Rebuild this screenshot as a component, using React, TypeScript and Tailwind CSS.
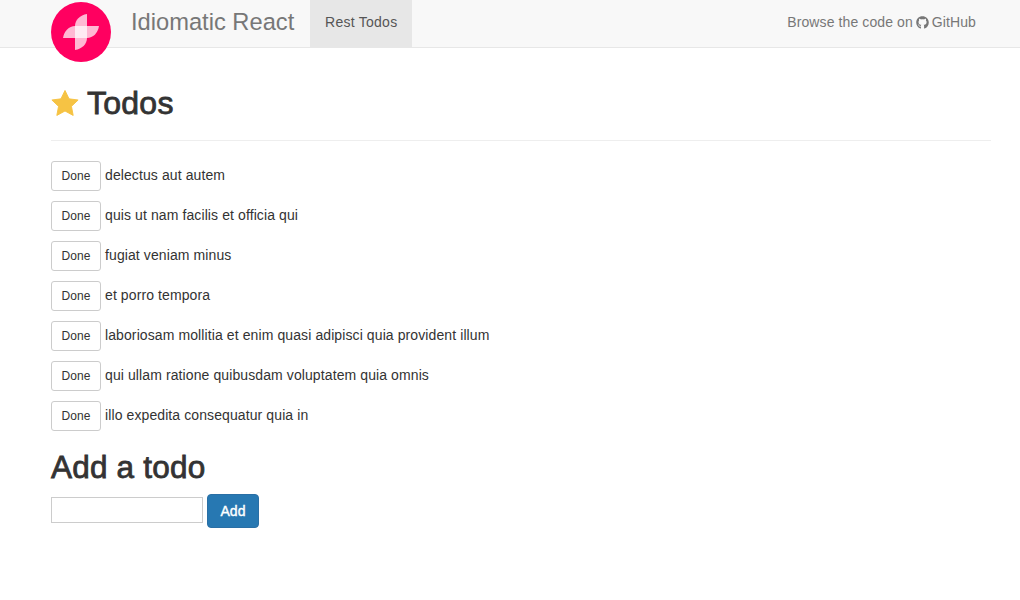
import { FaGithub } from "react-icons/fa";

const todos = [
  "delectus aut autem",
  "quis ut nam facilis et officia qui",
  "fugiat veniam minus",
  "et porro tempora",
  "laboriosam mollitia et enim quasi adipisci quia provident illum",
  "qui ullam ratione quibusdam voluptatem quia omnis",
  "illo expedita consequatur quia in",
];

const Logo = () => (
  <svg viewBox="0 0 60 60" className="absolute left-[51px] top-[2px] w-[60px] h-[60px]">
    <circle cx="30" cy="30" r="30" fill="#ff0060" />
    <path d="M36 12 C29 13 24 18 24 24 L24 48 C31 47 36 42 36 36 Z" fill="#fff" fillOpacity="0.72" />
    <path d="M12 36 C13 29 18 24 24 24 L48 24 C47 31 42 36 36 36 Z" fill="#fff" fillOpacity="0.72" />
  </svg>
);

const Star = () => (
  <svg viewBox="0 0 28 27" className="w-[28px] h-[26px] -mt-[2px]">
    <path
      d="M14 0.5 L18.2 9.2 L27.6 10.4 L20.7 17 L22.5 26.4 L14 21.8 L5.5 26.4 L7.3 17 L0.4 10.4 L9.8 9.2 Z"
      fill="#f6c344"
      stroke="#f6c344"
      strokeLinejoin="round"
    />
  </svg>
);

export default function App() {
  return (
    <div className="relative min-h-[600px] bg-white font-['Liberation_Sans',Arial,sans-serif] text-[14px] tracking-[0.1px] text-[#333]">
      <nav className="h-[48px] bg-[#f8f8f8] border-b border-[#e7e7e7] flex pl-[131px] pr-[44px]">
        <a className="text-[23.7px] tracking-normal leading-[44px] text-[#777] mr-[16px]">Idiomatic React</a>
        <a className="h-[47px] w-[102px] pb-[2px] bg-[#e7e7e7] text-[#555] tracking-[0.25px] flex items-center justify-center">
          Rest Todos
        </a>
        <a className="ml-auto pb-[2px] flex items-center gap-[3px] text-[#777]">
          Browse the code on <FaGithub className="w-[13px] h-[13px]" /> GitHub
        </a>
      </nav>
      <Logo />
      <main className="pl-[51px] pr-[29px]">
        <div className="mt-[39px] pb-[20px] border-b border-[#eee] flex items-center gap-[8px] h-[54px]">
          <Star />
          <h1 className="text-[32px] tracking-[0.25px] [-webkit-text-stroke:0.8px] leading-[33px]">Todos</h1>
        </div>
        <ul className="mt-[20px] flex flex-col gap-[10px]">
          {todos.map((todo) => (
            <li key={todo} className="flex items-center gap-[4px] h-[30px]">
              <button className="w-[50px] h-[30px] bg-white border border-[#ccc] rounded-[3px] text-[12px] text-[#333]">
                Done
              </button>
              <span className="pb-[2px]">{todo}</span>
            </li>
          ))}
        </ul>
        <h2 className="mt-[20px] text-[31.5px] tracking-[0.2px] [-webkit-text-stroke:0.8px] leading-[33px]">Add a todo</h2>
        <form className="mt-[13px] flex items-start gap-[4px]">
          <input type="text" className="w-[152px] h-[26px] border border-[#ccc] bg-white" />
          <button type="button" className="w-[52px] h-[34px] -mt-[3px] bg-[#2778b2] border border-[#2a6fa5] rounded-[4px] text-white [-webkit-text-stroke:0.4px]">
            Add
          </button>
        </form>
      </main>
    </div>
  );
}
